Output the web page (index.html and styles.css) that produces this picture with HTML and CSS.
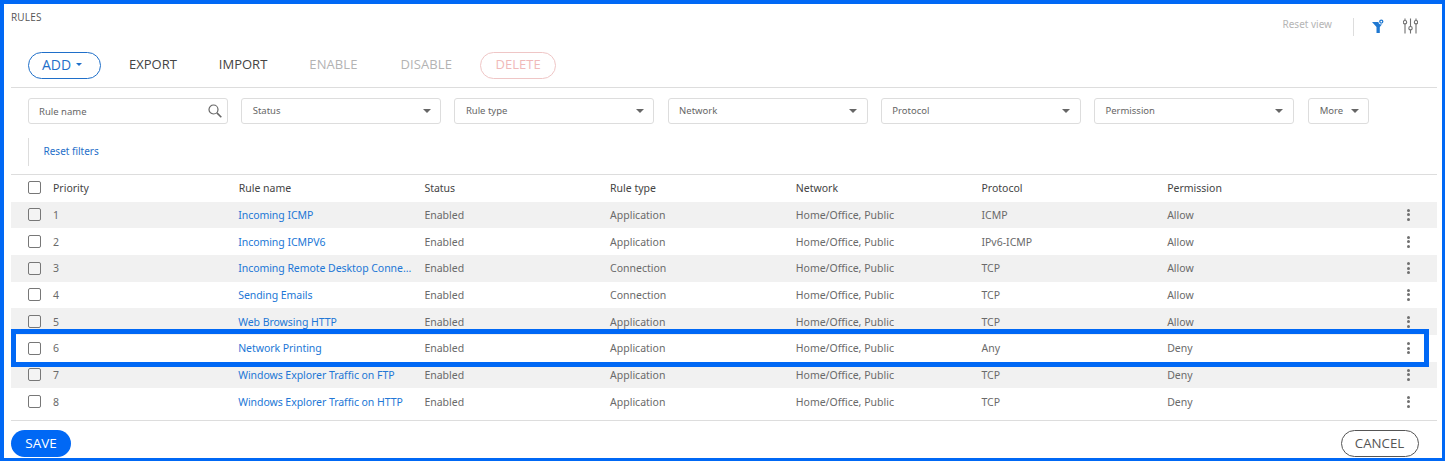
FILE: index.html
```html
<!DOCTYPE html>
<html lang="en">
<head>
<meta charset="utf-8">
<title>Rules</title>
<link rel="stylesheet" href="styles.css">
</head>
<body>
<div class="frame">
  <header class="head">
    <h1 class="title">RULES</h1>
    <div class="view-tools">
      <span class="reset-view">Reset view</span>
      <span class="tool-sep"></span>
      <svg class="tool-icon filter-icon" width="12" height="14" viewBox="0 0 12 14"><path d="M0 3H12L7.8 8V14H4.5V8Z" fill="#1f78d1"/><circle cx="9.3" cy="2.6" r="2.9" fill="#fff"/><circle cx="9.3" cy="2.6" r="1.5" fill="none" stroke="#1f78d1" stroke-width="1.3"/></svg>
      <svg class="tool-icon sliders-icon" width="15" height="16" viewBox="0 0 15 16" fill="none" stroke="#707070" stroke-width="1.1"><path d="M2 0.5V2.5M2 6V15.5M7.5 0.5V8.5M7.5 12V15.5M13 0.5V2.5M13 6V15.5"/><circle cx="2" cy="4.2" r="1.7"/><circle cx="7.5" cy="10.2" r="1.7"/><circle cx="13" cy="4.2" r="1.7"/></svg>
    </div>
  </header>

  <div class="actions">
    <button class="pill pill-add">ADD <span class="caret caret-blue"></span></button>
    <button class="act">EXPORT</button>
    <button class="act">IMPORT</button>
    <button class="act off">ENABLE</button>
    <button class="act off">DISABLE</button>
    <button class="pill pill-delete">DELETE</button>
  </div>

  <div class="filters">
    <div class="field field-search"><span>Rule name</span>
      <svg width="14" height="14" viewBox="0 0 14 14" fill="none" stroke="#666" stroke-width="1.2"><circle cx="5.5" cy="5.5" r="4.5"/><path d="M8.9 8.9L13.3 13.3" stroke-width="1.6"/></svg>
    </div>
    <div class="field"><span>Status</span><i class="caret"></i></div>
    <div class="field"><span>Rule type</span><i class="caret"></i></div>
    <div class="field"><span>Network</span><i class="caret"></i></div>
    <div class="field"><span>Protocol</span><i class="caret"></i></div>
    <div class="field"><span>Permission</span><i class="caret"></i></div>
    <div class="field field-more"><span>More</span><i class="caret"></i></div>
  </div>

  <div class="reset-row"><a class="reset-filters">Reset filters</a></div>

  <div class="table">
    <div class="row row-head">
      <span class="box"></span><span>Priority</span><span>Rule name</span><span>Status</span><span>Rule type</span><span>Network</span><span>Protocol</span><span>Permission</span><span></span>
    </div>
    <div class="row stripe"><span class="box"></span><span>1</span><a class="link">Incoming ICMP</a><span>Enabled</span><span>Application</span><span>Home/Office, Public</span><span>ICMP</span><span>Allow</span><span class="dots"><i></i><i></i><i></i></span></div>
    <div class="row"><span class="box"></span><span>2</span><a class="link">Incoming ICMPV6</a><span>Enabled</span><span>Application</span><span>Home/Office, Public</span><span>IPv6-ICMP</span><span>Allow</span><span class="dots"><i></i><i></i><i></i></span></div>
    <div class="row stripe"><span class="box"></span><span>3</span><a class="link">Incoming Remote Desktop Conne...</a><span>Enabled</span><span>Connection</span><span>Home/Office, Public</span><span>TCP</span><span>Allow</span><span class="dots"><i></i><i></i><i></i></span></div>
    <div class="row"><span class="box"></span><span>4</span><a class="link">Sending Emails</a><span>Enabled</span><span>Connection</span><span>Home/Office, Public</span><span>TCP</span><span>Allow</span><span class="dots"><i></i><i></i><i></i></span></div>
    <div class="row stripe"><span class="box"></span><span>5</span><a class="link">Web Browsing HTTP</a><span>Enabled</span><span>Application</span><span>Home/Office, Public</span><span>TCP</span><span>Allow</span><span class="dots"><i></i><i></i><i></i></span></div>
    <div class="row"><span class="box"></span><span>6</span><a class="link">Network Printing</a><span>Enabled</span><span>Application</span><span>Home/Office, Public</span><span>Any</span><span>Deny</span><span class="dots"><i></i><i></i><i></i></span></div>
    <div class="row stripe"><span class="box"></span><span>7</span><a class="link">Windows Explorer Traffic on FTP</a><span>Enabled</span><span>Application</span><span>Home/Office, Public</span><span>TCP</span><span>Deny</span><span class="dots"><i></i><i></i><i></i></span></div>
    <div class="row"><span class="box"></span><span>8</span><a class="link">Windows Explorer Traffic on HTTP</a><span>Enabled</span><span>Application</span><span>Home/Office, Public</span><span>TCP</span><span>Deny</span><span class="dots"><i></i><i></i><i></i></span></div>
  </div>

  <footer class="foot">
    <button class="pill-save">SAVE</button>
    <button class="pill-cancel">CANCEL</button>
  </footer>

  <div class="highlight"></div>
</div>
</body>
</html>
```

FILE: styles.css
```css
* { box-sizing: border-box; }
html, body { margin: 0; padding: 0; }
body { font-family: "Noto Sans", "Liberation Sans", sans-serif; background: #fff; overflow: hidden; }
.frame {
  position: relative;
  width: 1445px;
  height: 461px;
  border: solid #0068f5;
  border-width: 4px 3.5px 3.5px 4px;
  padding-left: 7px;
  padding-right: 5.5px;
  display: flex;
  flex-direction: column;
  background: #fff;
}
.head {
  height: 48px;
  display: flex;
  justify-content: space-between;
  align-items: flex-start;
}
.title {
  margin: 8px 0 0;
  font: 400 10px/10px "Open Sans", "Noto Sans", sans-serif;
  color: #555;
  letter-spacing: 0.2px;
}
.view-tools { display: flex; align-items: center; height: 18px; margin-top: 14px; padding-right: 19px; }
.reset-view { font-size: 10px; color: #b5b5b5; width: 70px; margin-bottom: 6px; }
.tool-sep { width: 1px; height: 18px; background: #ddd; }
.tool-icon { margin-bottom: 3px; }
.filter-icon { margin-left: 18px; }
.sliders-icon { margin-left: 19px; }

.actions {
  height: 36px;
  padding-left: 17px;
  border-bottom: 1px solid #ddd;
  display: flex;
  align-items: flex-start;
}
button { font-family: "Open Sans", "Noto Sans", sans-serif; background: none; border: 0; padding: 0; cursor: pointer; }
.pill { height: 27px; border-radius: 14px; font-size: 13px; background: #fff; padding-bottom: 3px; }
.pill-add { width: 73px; border: 1px solid #1f6fc9; color: #1f6fc9; display: flex; align-items: center; gap: 5px; padding-left: 13px; font-size: 14px; }
.act { height: 27px; font-size: 13px; color: #444; margin-left: 28px; padding-bottom: 3px; }
.act + .act { margin-left: 42px; }
.act.off { color: #b3b3b3; letter-spacing: 0.1px; }
.act.off + .act.off { margin-left: 43px; }
.pill-delete { width: 76px; margin-left: 28px; border: 1px solid #efc6c6; color: #f0b9b9; }
.caret {
  display: inline-block;
  width: 0; height: 0;
  border-left: 4px solid transparent;
  border-right: 4px solid transparent;
  border-top: 4.5px solid #666;
}
.caret-blue { border-left-width: 3.5px; border-right-width: 3.5px; border-top: 3.5px solid #1f6fc9; }

.filters { display: flex; margin: 10px 0 0 17px; gap: 13.2px; }
.field {
  width: 200px;
  height: 26px;
  border: 1px solid #ddd;
  border-radius: 3px;
  display: flex;
  align-items: center;
  justify-content: space-between;
  padding: 0 9.5px 1px 10.5px;
  font-size: 9.5px;
  color: #666;
}
.field-search { padding-right: 5px; padding-left: 10px; }
.field-search span { margin-top: 2px; }
.field-more { width: 61px; margin-left: 1px; padding-right: 9px; }

.reset-row {
  height: 28px;
  margin: 14px 0 0 17px;
  padding: 0 0 2px 14.5px;
  border-left: 1px solid #ddd;
  display: flex;
  align-items: center;
}
.reset-filters { font-size: 10px; color: #1f6fc9; }

.table { margin-top: 8px; border-top: 1px solid #ddd; border-bottom: 1px solid #ddd; height: 247px; }
.row {
  display: grid;
  grid-template-columns: 25px repeat(6, 185.7px) 1fr 29.5px;
  align-items: center;
  height: 26.67px;
  padding-left: 17px;
  font-size: 10.5px;
  color: #6a6a6a;
}
.row > span, .row > a { white-space: nowrap; }
.row-head { color: #444; height: 26.6px; padding-bottom: 1px; }
.stripe { background: #f1f1f1; }
.link { color: #2277d6; letter-spacing: -0.05px; margin-left: -0.5px; }
.box { width: 13px; height: 13px; border: 1px solid #777; border-radius: 2px; background: #fff; }
.stripe .box { background: #f4f4f4; }
.dots { display: flex; flex-direction: column; gap: 1.5px; align-items: center; width: 3px; }
.dots i { width: 3px; height: 3px; border-radius: 50%; background: #707070; }

.foot { flex: 1; display: flex; justify-content: space-between; align-items: flex-start; padding: 9px 18px 0 0; }
.pill-save { width: 60px; height: 27px; border-radius: 14px; background: #0068f5; color: #fff; font-size: 13.5px; font-weight: 500; padding-bottom: 2px; }
.pill-cancel { width: 78px; height: 27px; border-radius: 14px; border: 1px solid #555; background: #fff; color: #555; font-size: 13.3px; padding-bottom: 2px; }

.highlight {
  position: absolute;
  left: 7px;
  top: 325px;
  width: 1418px;
  height: 38px;
  border: 5px solid #0068f5;
  pointer-events: none;
}
```
